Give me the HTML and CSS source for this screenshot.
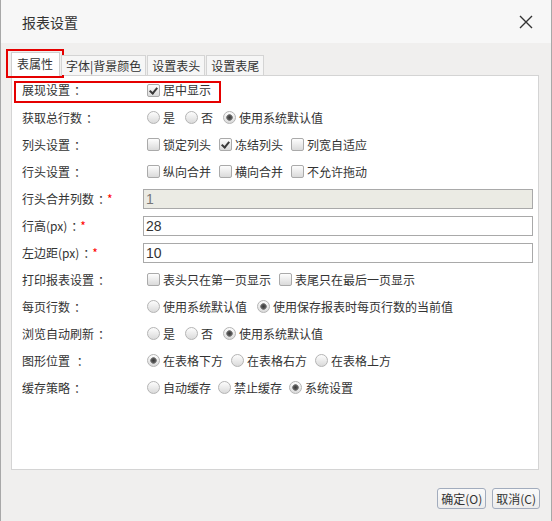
FILE: index.html
```html
<!DOCTYPE html>
<html lang="zh-CN">
<head>
    <meta charset="UTF-8">
    <title>报表设置</title>
    <link rel="stylesheet" href="styles.css">
</head>
<body>
    <div class="dialog">
        <!-- Header -->
        <div class="dlg-head">
            <span class="dlg-title">报表设置</span>
            <svg class="dlg-close" width="14" height="14" viewBox="0 0 14 14">
                <path d="M1 1 L13 13 M13 1 L1 13" stroke="#333" stroke-width="1.4" fill="none"/>
            </svg>
        </div>

        <!-- Tabs + panel -->
        <div class="dlg-body">
            <div class="tabs">
                <div class="tab active">表属性</div>
                <div class="tab">字体|背景颜色</div>
                <div class="tab">设置表头</div>
                <div class="tab">设置表尾</div>
            </div>

            <div class="panel">
                <div class="row first">
                    <span class="lbl">展现设置<b>：</b></span>
                    <span class="ctl">
                        <label class="opt"><input type="checkbox" checked>居中显示</label>
                    </span>
                </div>
                <div class="row">
                    <span class="lbl">获取总行数<b>：</b></span>
                    <span class="ctl radios">
                        <label class="opt"><input type="radio" name="total">是</label>
                        <label class="opt"><input type="radio" name="total">否</label>
                        <label class="opt"><input type="radio" name="total" checked>使用系统默认值</label>
                    </span>
                </div>
                <div class="row">
                    <span class="lbl">列头设置<b>：</b></span>
                    <span class="ctl">
                        <label class="opt"><input type="checkbox">锁定列头</label>
                        <label class="opt"><input type="checkbox" checked>冻结列头</label>
                        <label class="opt"><input type="checkbox">列宽自适应</label>
                    </span>
                </div>
                <div class="row">
                    <span class="lbl">行头设置<b>：</b></span>
                    <span class="ctl">
                        <label class="opt"><input type="checkbox">纵向合并</label>
                        <label class="opt"><input type="checkbox">横向合并</label>
                        <label class="opt"><input type="checkbox">不允许拖动</label>
                    </span>
                </div>
                <div class="row">
                    <span class="lbl">行头合并列数<b>：</b><i class="req">*</i></span>
                    <input class="field" type="text" value="1" disabled>
                </div>
                <div class="row">
                    <span class="lbl">行高(px)<b>：</b><i class="req">*</i></span>
                    <input class="field" type="text" value="28">
                </div>
                <div class="row">
                    <span class="lbl">左边距(px)<b>：</b><i class="req">*</i></span>
                    <input class="field" type="text" value="10">
                </div>
                <div class="row">
                    <span class="lbl">打印报表设置<b>：</b></span>
                    <span class="ctl">
                        <label class="opt"><input type="checkbox">表头只在第一页显示</label>
                        <label class="opt"><input type="checkbox">表尾只在最后一页显示</label>
                    </span>
                </div>
                <div class="row">
                    <span class="lbl">每页行数<b>：</b></span>
                    <span class="ctl radios">
                        <label class="opt"><input type="radio" name="perpage">使用系统默认值</label>
                        <label class="opt"><input type="radio" name="perpage" checked>使用保存报表时每页行数的当前值</label>
                    </span>
                </div>
                <div class="row">
                    <span class="lbl">浏览自动刷新<b>：</b></span>
                    <span class="ctl radios">
                        <label class="opt"><input type="radio" name="refresh">是</label>
                        <label class="opt"><input type="radio" name="refresh">否</label>
                        <label class="opt"><input type="radio" name="refresh" checked>使用系统默认值</label>
                    </span>
                </div>
                <div class="row">
                    <span class="lbl">图形位置&nbsp;<b>：</b></span>
                    <span class="ctl">
                        <label class="opt"><input type="radio" name="chart" checked>在表格下方</label>
                        <label class="opt"><input type="radio" name="chart">在表格右方</label>
                        <label class="opt"><input type="radio" name="chart">在表格上方</label>
                    </span>
                </div>
                <div class="row">
                    <span class="lbl">缓存策略<b>：</b></span>
                    <span class="ctl tight">
                        <label class="opt"><input type="radio" name="cache">自动缓存</label>
                        <label class="opt"><input type="radio" name="cache">禁止缓存</label>
                        <label class="opt"><input type="radio" name="cache" checked>系统设置</label>
                    </span>
                </div>
            </div>
        </div>

        <!-- Footer buttons -->
        <div class="dlg-foot">
            <button class="btn">确定(O)</button>
            <button class="btn">取消(C)</button>
        </div>

        <!-- Red annotation boxes -->
        <div class="mark mark-tab"></div>
        <div class="mark mark-row"></div>
    </div>
</body>
</html>
```

FILE: styles.css
```css
/* General */
body {
    margin: 0;
    background: #f0efee;
    font-family: "Noto Sans CJK SC", "Noto Sans", sans-serif;
    font-size: 12px;
    color: #333;
}

.dialog {
    position: relative; /* for the red marks */
    width: 552px;
    height: 521px;
    box-sizing: border-box;
    border-left: 1px solid #a8a8a8;
    border-right: 1px solid #a8a8a8;
    background: #f0efee;
    overflow: hidden;
}

/* Header */
.dlg-head {
    height: 43px;
    background: #f7f7f7;
    display: flex;
    align-items: center;
    justify-content: space-between;
    padding: 0 18px 0 21px;
}

.dlg-title {
    font-size: 14px;
    color: #333;
    line-height: 16px;
}

.dlg-close {
    display: block;
    margin-top: 1px;
}

/* Tabs */
.dlg-body {
    padding: 9px 12px 0 10px;
}

.tabs {
    display: flex;
    align-items: flex-end;
    height: 23px;
    position: relative;
    z-index: 1;
}

.tab {
    height: 19px;
    line-height: 19px;
    padding: 0 4px;
    margin-right: 1px;
    border: 1px solid #d4d4d4;
    border-bottom: none;
    background: #f6f6f6;
    color: #333;
    white-space: nowrap;
}

.tab.active {
    height: 23px;
    line-height: 21px;
    padding: 0 6px 0 5px;
    border-color: #cfcfcf;
    background: #fff;
    margin-bottom: -1px;
}

/* Content panel */
.panel {
    height: 395px;
    box-sizing: border-box;
    border: 1px solid #d4d4d4;
    background: #fff;
    padding: 0 5px 0 0;
}

.row {
    display: flex;
    align-items: center;
    height: 27px;
}

.row.first {
    height: 28px;
}

.lbl {
    width: 131px;
    flex: none;
    box-sizing: border-box;
    padding-left: 10px;
    white-space: nowrap;
    line-height: 14px;
}

/* full-width colon, drawn centred in its 12px cell */
.lbl b {
    padding-left: 4px;
    letter-spacing: -4px;
    font-weight: normal;
}

.req {
    font-style: normal;
    color: #f00;
    margin-left: 1px;
}

.ctl {
    display: flex;
    align-items: center;
}

.opt {
    display: flex;
    align-items: center;
    margin-right: 4px;
    white-space: nowrap;
    line-height: 14px;
}

.radios .opt {
    margin-right: 6px;
}

.tight .opt {
    margin-right: 3px;
}

/* Checkboxes */
.opt input {
    -webkit-appearance: none;
    appearance: none;
    position: relative;
    width: 13px;
    height: 13px;
    margin: 0 3px 0 4px;
    box-sizing: border-box;
    border: 1px solid #aaa;
    background: linear-gradient(#fdfdfd, #dadada);
    flex: none;
}

.opt input[type="checkbox"] {
    border-radius: 2px;
}

.opt input[type="checkbox"]:checked::after {
    content: "";
    position: absolute;
    left: 3px;
    top: 1px;
    width: 3px;
    height: 6px;
    border-right: 2px solid #3a3a3a;
    border-bottom: 2px solid #3a3a3a;
    transform: rotate(40deg);
}

/* Radios */
.opt input[type="radio"] {
    border-radius: 50%;
    border-color: #b4b4b4;
}

.opt input[type="radio"]:checked {
    background: radial-gradient(circle, #3a3a3a 0, #555 2px, #888 3px, rgba(255,255,255,0) 3.6px),
                linear-gradient(#fdfdfd, #dadada);
}

/* Text fields */
.field {
    flex: 1;
    height: 20px;
    box-sizing: border-box;
    margin: 0;
    padding: 0 2px;
    border: 1px solid #a9a9a9;
    font-family: "Liberation Sans", Arial, sans-serif;
    font-size: 14px;
    color: #333;
    background: #fff;
}

.field:disabled {
    background: #ebebe4;
    color: #777;
}

/* Footer */
.dlg-foot {
    display: flex;
    justify-content: flex-end;
    gap: 6px;
    padding: 18px 11px 0 0;
}

.btn {
    height: 21px;
    padding: 0 3px;
    border: 1px solid #a2acbd;
    border-radius: 3px;
    background: linear-gradient(#fafafa, #ececec);
    font-family: "Noto Sans CJK SC", sans-serif;
    font-size: 12px;
    color: #333;
    line-height: 17px;
}

/* Red annotation boxes */
.mark {
    position: absolute;
    box-sizing: border-box;
    border: 2px solid #e50000;
    pointer-events: none;
}

.mark-tab {
    left: 5px;
    top: 49px;
    width: 58px;
    height: 29px;
}

.mark-row {
    left: 13px;
    top: 81px;
    width: 207px;
    height: 22px;
}
```
